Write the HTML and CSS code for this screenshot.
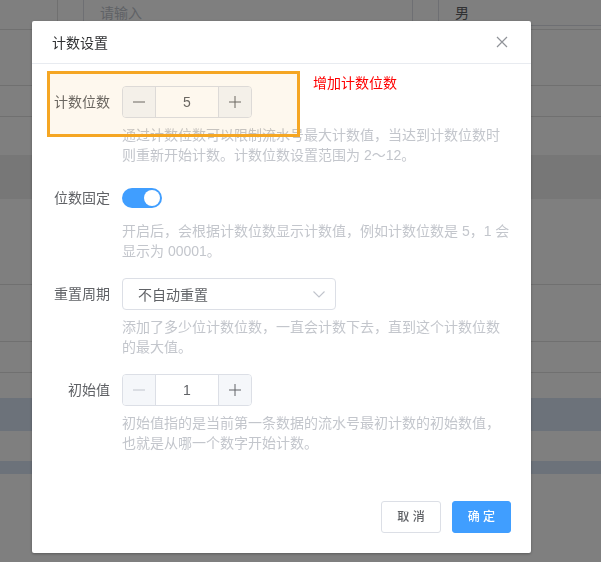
FILE: index.html
```html
<!DOCTYPE html>
<html lang="zh-CN">
  <head>
    <meta charset="utf-8" />
    <title>计数设置</title>
    <link rel="stylesheet" href="styles.css">
  </head>
  <body>
    <!-- 背景里的表格 -->
    <div class="tabel">
      <div class="rad rad-top linje">
        <div class="celle-a"></div>
        <div class="felt">请输入</div>
        <div class="vaelg">男</div>
      </div>
      <div class="rad h56 linje"></div>
      <div class="rad h31 linje"></div>
      <div class="rad h38"></div>
      <div class="rad h44 graa"></div>
      <div class="rad h86 linje"></div>
      <div class="rad h57 linje"></div>
      <div class="rad h31 linje"></div>
      <div class="rad h25"></div>
      <div class="rad h33 blaa"></div>
      <div class="rad h30"></div>
      <div class="rad h13 blaa"></div>
    </div>

    <div class="maske"></div>

    <section class="dialog">
      <header class="dialog-top">
        <span class="titel">计数设置</span>
        <svg class="luk" width="12" height="12" viewBox="0 0 12 12">
          <path d="M1 1 L11 11 M11 1 L1 11" stroke="#909399" stroke-width="1.2" fill="none"/>
        </svg>
      </header>

      <div class="dialog-krop">
        <div class="punkt">
          <label>计数位数</label>
          <div class="indhold">
            <div class="tal">
              <span class="knap minus">
                <svg width="12" height="12" viewBox="0 0 12 12"><path d="M0 6 H12" stroke="currentColor" stroke-width="1"/></svg>
              </span>
              <span class="vaerdi">5</span>
              <span class="knap plus">
                <svg width="12" height="12" viewBox="0 0 12 12"><path d="M0 6 H12 M6 0 V12" stroke="currentColor" stroke-width="1"/></svg>
              </span>
            </div>
            <p class="hjaelp">通过计数位数可以限制流水号最大计数值，当达到计数位数时则重新开始计数。计数位数设置范围为 2～12。</p>
          </div>
        </div>

        <div class="punkt">
          <label>位数固定</label>
          <div class="indhold">
            <div class="kontakt-boks">
              <div class="kontakt"></div>
            </div>
            <p class="hjaelp">开启后，会根据计数位数显示计数值，例如计数位数是 5，1 会显示为 00001。</p>
          </div>
        </div>

        <div class="punkt">
          <label>重置周期</label>
          <div class="indhold">
            <div class="liste">
              <span>不自动重置</span>
              <svg width="12" height="7" viewBox="0 0 12 7"><path d="M0.5 0.5 L6 6 L11.5 0.5" stroke="#c0c4cc" stroke-width="1.1" fill="none"/></svg>
            </div>
            <p class="hjaelp">添加了多少位计数位数，一直会计数下去，直到这个计数位数的最大值。</p>
          </div>
        </div>

        <div class="punkt">
          <label>初始值</label>
          <div class="indhold">
            <div class="tal">
              <span class="knap minus slukket">
                <svg width="12" height="12" viewBox="0 0 12 12"><path d="M0 6 H12" stroke="currentColor" stroke-width="1"/></svg>
              </span>
              <span class="vaerdi">1</span>
              <span class="knap plus">
                <svg width="12" height="12" viewBox="0 0 12 12"><path d="M0 6 H12 M6 0 V12" stroke="currentColor" stroke-width="1"/></svg>
              </span>
            </div>
            <p class="hjaelp">初始值指的是当前第一条数据的流水号最初计数的初始数值，也就是从哪一个数字开始计数。</p>
          </div>
        </div>
      </div>

      <footer class="dialog-bund">
        <button class="btn">取 消</button>
        <button class="btn primaer">确 定</button>
      </footer>

      <!-- markering oven på første række -->
      <div class="markering"></div>
      <div class="note">增加计数位数</div>
    </section>
  </body>
</html>
```

FILE: styles.css
```css
body {
  margin: 0;
  background-color: #fff;
  font-family: "Liberation Sans", "Noto Sans CJK SC", sans-serif;
  overflow: hidden;
}

.tabel .rad {
  box-sizing: border-box;
  width: 100%;
}

.linje {
  border-bottom: 1px solid #e0e0e0;
}

.rad-top {
  height: 30px;
  display: flex;
  align-items: flex-end;
}

.celle-a {
  width: 58px;
  height: 100%;
  border-right: 1px solid #e0e0e0;
  box-sizing: border-box;
}

.felt {
  margin-left: 25px;
  margin-bottom: 3px;
  width: 330px;
  height: 40px;
  border: 1px solid #dcdfe6;
  border-radius: 4px;
  box-sizing: border-box;
  display: flex;
  align-items: flex-end;
  padding: 0 0 4px 16px;
  color: #c0c4cc;
  font-size: 14px;
  line-height: 16px;
}

.vaelg {
  margin-left: 25px;
  margin-bottom: 3px;
  flex: 1;
  height: 40px;
  border: 1px solid #dcdfe6;
  border-right: 0;
  border-radius: 4px 0 0 4px;
  box-sizing: border-box;
  display: flex;
  align-items: flex-end;
  padding: 0 0 4px 16px;
  color: #606266;
  font-size: 14px;
  line-height: 16px;
}

.h13 { height: 13px; }
.h25 { height: 25px; }
.h30 { height: 30px; }
.h31 { height: 31px; }
.h33 { height: 33px; }
.h38 { height: 38px; }
.h44 { height: 44px; }
.h56 { height: 56px; }
.h57 { height: 57px; }
.h86 { height: 86px; }

.graa {
  background-color: #eeeeee;
}

.blaa {
  background-color: #d9e5f5;
}

.maske {
  position: fixed;
  top: 0;
  left: 0;
  right: 0;
  bottom: 0;
  background-color: rgba(0, 0, 0, 0.5);
}

.dialog {
  position: fixed;
  left: 32px;
  top: 21px;
  width: 499px;
  height: 532px;
  background-color: #fff;
  border-radius: 2px;
  box-shadow: 0 1px 3px rgba(0, 0, 0, 0.3);
  display: flex;
  flex-direction: column;
  box-sizing: border-box;
}

.dialog-top {
  height: 43px;
  box-sizing: border-box;
  border-bottom: 1px solid #e8ebf0;
  display: flex;
  align-items: center;
  justify-content: space-between;
  padding: 0 23px 0 20px;
}

.titel {
  font-size: 14px;
  color: #303133;
}

.dialog-krop {
  flex: 1;
  padding: 22px 20px 0 20px;
}

.punkt {
  display: flex;
  margin-bottom: 17px;
}

.punkt label {
  width: 70px;
  flex-shrink: 0;
  box-sizing: border-box;
  padding-right: 12px;
  text-align: right;
  line-height: 32px;
  font-size: 14px;
  color: #606266;
}

.indhold {
  flex: 1;
}

.hjaelp {
  margin: 7px 0 0 0;
  font-size: 14px;
  line-height: 20px;
  color: #c3c6cc;
}

.tal {
  display: flex;
  width: 130px;
  height: 32px;
  border: 1px solid #dcdfe6;
  border-radius: 4px;
  box-sizing: border-box;
  overflow: hidden;
}

.knap {
  width: 32px;
  display: flex;
  align-items: center;
  justify-content: center;
  background-color: #f5f7fa;
  color: #606266;
}

.minus {
  border-right: 1px solid #dcdfe6;
}

.plus {
  border-left: 1px solid #dcdfe6;
}

.slukket {
  color: #c0c4cc;
}

.vaerdi {
  flex: 1;
  text-align: center;
  line-height: 30px;
  font-size: 14px;
  color: #606266;
}

.kontakt-boks {
  height: 32px;
  display: flex;
  align-items: center;
}

.kontakt {
  position: relative;
  width: 40px;
  height: 20px;
  border-radius: 10px;
  background-color: #409eff;
}

.kontakt::after {
  content: "";
  position: absolute;
  top: 2px;
  right: 2px;
  width: 16px;
  height: 16px;
  border-radius: 50%;
  background-color: #fff;
}

.liste {
  width: 214px;
  height: 32px;
  box-sizing: border-box;
  border: 1px solid #dcdfe6;
  border-radius: 4px;
  padding: 0 10px 0 15px;
  display: flex;
  align-items: center;
  justify-content: space-between;
  font-size: 14px;
  color: #606266;
}

.dialog-bund {
  display: flex;
  justify-content: flex-end;
  gap: 11px;
  padding: 0 20px 20px 20px;
}

.btn {
  font-family: "Liberation Sans", "Noto Sans CJK SC", sans-serif;
  font-size: 12px;
  font-weight: 500;
  line-height: 12px;
  padding: 9px 15px;
  border: 1px solid #dcdfe6;
  border-radius: 3px;
  background-color: #fff;
  color: #606266;
  cursor: pointer;
}

.primaer {
  background-color: #409eff;
  border-color: #409eff;
  color: #fff;
}

.markering {
  position: absolute;
  left: 15px;
  top: 50px;
  width: 253px;
  height: 66px;
  box-sizing: border-box;
  border: 3px solid #f5a623;
  background-color: rgba(245, 166, 35, 0.08);
  pointer-events: none;
}

.note {
  position: absolute;
  left: 281px;
  top: 52px;
  font-size: 14px;
  line-height: 20px;
  color: #ff0000;
}
```
